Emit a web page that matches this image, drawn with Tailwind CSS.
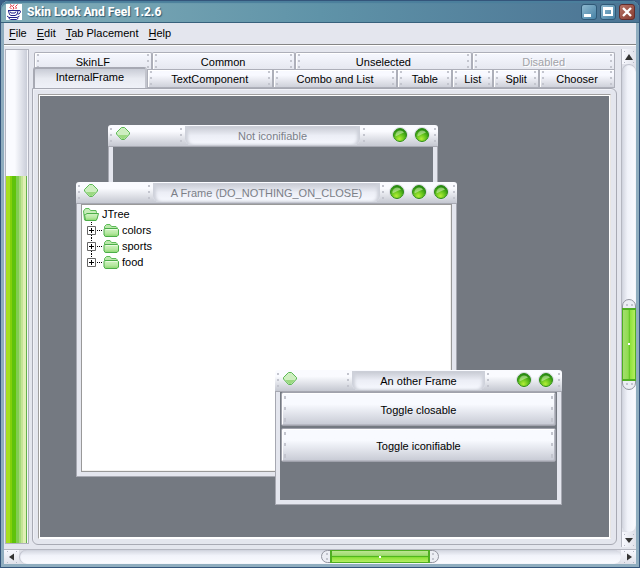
<!DOCTYPE html>
<html lang="en">
<head>
<meta charset="utf-8">
<title>Skin Look And Feel 1.2.6</title>
<script src="https://cdn.jsdelivr.net/npm/@tailwindcss/browser@4"></script>
</head>
<body class="font-['Liberation_Sans',Arial,sans-serif] text-[11px] leading-4 text-black bg-[#3a5f86]">
<svg class="absolute size-0" aria-hidden="true">
  <defs>
    <radialGradient id="orbFill" cx=".45" cy=".8" r=".75"><stop offset="0" stop-color="#b4ee38"/><stop offset=".5" stop-color="#62c21c"/><stop offset="1" stop-color="#23850f"/></radialGradient>
    <linearGradient id="shine" x1="0" y1="0" x2="1" y2="1"><stop offset="0" stop-color="#fff" stop-opacity=".3"/><stop offset="1" stop-color="#d8f8b0" stop-opacity=".65"/></linearGradient>
    <linearGradient id="folderFill" x1="0" y1="0" x2="0" y2="1"><stop offset="0" stop-color="#d4f3c6"/><stop offset=".6" stop-color="#b5e8a0"/><stop offset="1" stop-color="#8bd76f"/></linearGradient>
  </defs>
  <symbol id="dots" viewBox="0 0 2 14"><path d="M0 0h2v2H0zM0 6h2v2H0zM0 12h2v2H0z" fill="#c3c5ce"/></symbol>
  <symbol id="tallDots" viewBox="0 0 2 26"><path d="M0 0h2v3H0zM0 11h2v3H0zM0 22h2v4H0z" fill="#c3c5ce"/></symbol>
  <symbol id="orb" viewBox="0 0 16 16">
    <circle cx="8" cy="8" r="7.5" fill="#fff" stroke="#d6d8df" stroke-width="1"/>
    <circle cx="8" cy="8" r="6.5" fill="url(#orbFill)" stroke="#2c8a18"/>
    <path d="M3.5 9.500A5 5 0 0 1 8 3.500a5 5 0 0 1 4 2Q9 6.500 3.500 9.500z" fill="url(#shine)"/>
  </symbol>
  <symbol id="diamond" viewBox="0 0 14 13">
    <path d="M5.500.5h3l5 5v1.500l-5 5.500h-3l-5-5.500V5.500z" fill="#cdeec0" stroke="#5cb955"/>
    <path d="M2 8h10l-4 4H6z" fill="#9bd981"/>
  </symbol>
  <symbol id="folder" viewBox="0 0 16 13">
    <path d="M1.500 12V2.500l2-2H7l1.500 2h4.500l1 1V12z" fill="#b9e8aa" stroke="#5dbc58"/>
    <path d="M2.500 12.500L1 11V5.500l1-1h12.500l1 1V11l-1.500 1.500z" fill="url(#folderFill)" stroke="#4bae48"/>
    <path d="M3 5.500h11" stroke="#e8fadf"/>
  </symbol>
  <symbol id="folderOpen" viewBox="0 0 16 13">
    <path d="M1.500 12L.5 3l2-2.500H6l1.500 2H13l.5 2V12z" fill="#c6edb8" stroke="#5dbc58"/>
    <path d="M2.500 12.500l-1-6h1L4 5.500h11.500L14 11l-1 1.500z" fill="url(#folderFill)" stroke="#4bae48"/>
  </symbol>
  <symbol id="plus" viewBox="0 0 16 16">
    <path d="M5.500 0v4M5.500 13v3M11 8.500h5" stroke="#000" stroke-dasharray="1 1" fill="none"/>
    <path d="M1.500 4.500h8v8h-8z" fill="#fff" stroke="#666"/>
    <path d="M3 8.500h5M5.500 6v5" stroke="#000"/>
  </symbol>
</svg>

<div class="flex h-screen flex-col rounded-t-lg border border-[#34557b] bg-[#8fadbf]">
  <header class="flex h-[22px] shrink-0 items-center rounded-t-lg bg-linear-to-r from-[#83aeb9] via-[#5f93a8] to-[#4b7393] border-b border-[#37617c] pl-[5px] pr-1 shadow-[inset_0_2px_1px_#4b7f9c]">
    <svg class="size-4 shrink-0 bg-white" viewBox="0 0 16 16" fill="none">
      <path d="M4 .5l1.500 1-1.500 2 1.500 1.500M8 .5L6.500 2.500 8 4 7 5.500M11.500.5l-2 2 1 1.500-1 1" stroke="#e0303c"/>
      <path d="M2 6.500h10M2.500 7l1 3.500L5 11.500h4l2-1L12 7M4 7.500l1 1.500h4l1-1.500M12 6.500h2l.5 1.500L13 10h-1.500M1 12l2 1.500h8l2.500-1.500M2.500 14l2 1.500h6l2-1.500" stroke="#23238c"/>
    </svg>
    <h1 class="flex-1 whitespace-nowrap pl-[5px] pt-px font-[Roboto,sans-serif] text-xs font-extrabold text-white [text-shadow:1px_1px_1px_#2e5a72]">Skin Look And Feel 1.2.6</h1>
    <div class="flex gap-[3px]">
      <button aria-label="Minimize" class="size-4 rounded-[3px] border border-[#2f5977] bg-linear-to-br from-[#8fb9cf] to-[#4682a6]"><svg viewBox="0 0 14 14"><path d="M2 9h7v3H2z" fill="#fff"/></svg></button>
      <button aria-label="Maximize" class="size-4 rounded-[3px] border border-[#2f5977] bg-linear-to-br from-[#8fb9cf] to-[#4682a6]"><svg viewBox="0 0 14 14"><path d="M2 2h10v9H2zM4 5v4h6V5z" fill="#fff" fill-rule="evenodd"/></svg></button>
      <button aria-label="Close" class="size-4 rounded-[3px] border border-[#632d2c] bg-linear-to-br from-[#b77468] to-[#873c30]"><svg viewBox="0 0 14 14"><path d="M3 3l8 8M11 3l-8 8" stroke="#fff" stroke-width="2.300"/></svg></button>
    </div>
  </header>

  <div class="mx-[3px] mb-[3px] flex min-h-0 flex-1 flex-col bg-[#e4e6ee]">
    <nav class="flex h-[22px] shrink-0 items-center gap-[10px] border-b border-[#858585] px-[5px] pb-px shadow-[0_1px_0_#fff]">
      <button><u class="underline-offset-2">F</u>ile</button>
      <button><u class="underline-offset-2">E</u>dit</button>
      <button><u class="underline-offset-2">T</u>ab Placement</button>
      <button><u class="underline-offset-2">H</u>elp</button>
    </nav>

    <div class="flex min-h-0 flex-1 pt-1">
      <div role="progressbar" aria-label="Progress" aria-valuenow="74" class="ml-px flex w-6 shrink-0 flex-col justify-end border border-[#b1b3be] bg-linear-to-r from-[#fafbff] from-40% to-[#c6cad6] pr-px mb-[3px] shadow-[inset_-1px_0_0_#f4f5fa]">
        <div class="bg-[linear-gradient(90deg,#a9dd1f_0_2px,#a5e020_2px_4px,#83d00c_4px_6px,#5fc30b_6px_10px,#81cd52_10px_13px,#a5d979_13px_15px,#c4e495_15px_17px,#e0efb4_17px_20px,#62b04c_20px)]" style="height:74.500%"></div>
      </div>

      <main class="flex min-w-0 flex-1 flex-col pl-[3px] pr-1 pt-[3px] pb-[2px]">
        <div role="tablist" class="px-[2px]">
          <div class="grid h-[17px] grid-cols-[118fr_143fr_178fr_143fr]">
            <button role="tab" class="flex overflow-hidden items-start rounded-t-[2px] border border-b-0 border-[#adafb9] bg-linear-to-b from-[#f6f8ff] to-[#e6e8f0] px-[2px] pt-px shadow-[inset_1px_1px_0_#fff]"><svg class="h-[14px] w-[2px]"><use href="#dots"/></svg><span class="flex-1">SkinLF</span><svg class="h-[14px] w-[2px]"><use href="#dots"/></svg></button>
            <button role="tab" class="flex overflow-hidden items-start rounded-t-[2px] border border-b-0 border-[#adafb9] bg-linear-to-b from-[#f6f8ff] to-[#e6e8f0] px-[2px] pt-px shadow-[inset_1px_1px_0_#fff]"><svg class="h-[14px] w-[2px]"><use href="#dots"/></svg><span class="flex-1">Common</span><svg class="h-[14px] w-[2px]"><use href="#dots"/></svg></button>
            <button role="tab" class="flex overflow-hidden items-start rounded-t-[2px] border border-b-0 border-[#adafb9] bg-linear-to-b from-[#f6f8ff] to-[#e6e8f0] px-[2px] pt-px shadow-[inset_1px_1px_0_#fff]"><svg class="h-[14px] w-[2px]"><use href="#dots"/></svg><span class="flex-1">Unselected</span><svg class="h-[14px] w-[2px]"><use href="#dots"/></svg></button>
            <button role="tab" disabled class="flex overflow-hidden items-start rounded-t-[2px] border border-b-0 border-[#adafb9] bg-linear-to-b from-[#f6f8ff] to-[#e6e8f0] px-[2px] pt-px text-[#a2a3a8] [text-shadow:1px_1px_0_#fff] shadow-[inset_1px_1px_0_#fff]"><svg class="h-[14px] w-[2px]"><use href="#dots"/></svg><span class="flex-1">Disabled</span><svg class="h-[14px] w-[2px]"><use href="#dots"/></svg></button>
          </div>
          <div class="grid h-[19px] grid-cols-[113fr_126fr_125fr_55fr_41fr_46fr_76fr]">
            <button role="tab" aria-selected="true" class="-ml-px -mt-[2px] flex overflow-hidden items-start rounded-t-[3px] border-2 border-b-0 border-[#a7a9b3] border-r-[#c2c4cd] bg-linear-to-b from-[#c9ccd6] via-[#e8eaf1] via-50% to-[#eff1f8] px-px"><span class="flex-1">InternalFrame</span></button>
            <button role="tab" class="flex items-start border border-[#adafb9] bg-linear-to-b from-[#f8f9ff] from-30% to-[#cfd1da] px-[2px] pt-px shadow-[inset_1px_1px_0_#fff]"><svg class="h-[14px] w-[2px]"><use href="#dots"/></svg><span class="flex-1">TextComponent</span><svg class="h-[14px] w-[2px]"><use href="#dots"/></svg></button>
            <button role="tab" class="flex items-start border border-[#adafb9] bg-linear-to-b from-[#f8f9ff] from-30% to-[#cfd1da] px-[2px] pt-px shadow-[inset_1px_1px_0_#fff]"><svg class="h-[14px] w-[2px]"><use href="#dots"/></svg><span class="flex-1">Combo and List</span><svg class="h-[14px] w-[2px]"><use href="#dots"/></svg></button>
            <button role="tab" class="flex items-start border border-[#adafb9] bg-linear-to-b from-[#f8f9ff] from-30% to-[#cfd1da] px-[2px] pt-px shadow-[inset_1px_1px_0_#fff]"><svg class="h-[14px] w-[2px]"><use href="#dots"/></svg><span class="flex-1">Table</span><svg class="h-[14px] w-[2px]"><use href="#dots"/></svg></button>
            <button role="tab" class="flex items-start border border-[#adafb9] bg-linear-to-b from-[#f8f9ff] from-30% to-[#cfd1da] px-[2px] pt-px shadow-[inset_1px_1px_0_#fff]"><svg class="h-[14px] w-[2px]"><use href="#dots"/></svg><span class="flex-1">List</span><svg class="h-[14px] w-[2px]"><use href="#dots"/></svg></button>
            <button role="tab" class="flex items-start border border-[#adafb9] bg-linear-to-b from-[#f8f9ff] from-30% to-[#cfd1da] px-[2px] pt-px shadow-[inset_1px_1px_0_#fff]"><svg class="h-[14px] w-[2px]"><use href="#dots"/></svg><span class="flex-1">Split</span><svg class="h-[14px] w-[2px]"><use href="#dots"/></svg></button>
            <button role="tab" class="flex items-start border border-[#adafb9] bg-linear-to-b from-[#f8f9ff] from-30% to-[#cfd1da] px-[2px] pt-px shadow-[inset_1px_1px_0_#fff]"><svg class="h-[14px] w-[2px]"><use href="#dots"/></svg><span class="flex-1">Chooser</span><svg class="h-[14px] w-[2px]"><use href="#dots"/></svg></button>
          </div>
        </div>

        <div role="tabpanel" class="flex min-h-0 flex-1 rounded-md rounded-tl-none border border-[#a8aab4] p-[5px] shadow-[inset_1px_1px_0_#f0f1f7]">
          <div class="flex flex-1 border border-[#a09f9f] border-r-[#e8e6e4] border-b-white bg-white p-px">
            <div class="relative flex-1 overflow-hidden bg-[#747981]">

              <section class="absolute left-[68px] top-[29px] flex h-[150px] w-[330px] flex-col">
                <div class="flex h-[22px] shrink-0 rounded-t-[3px] border-b border-[#a6a8b1] bg-linear-to-b from-[#fafbff] from-30% to-[#c5c8d1]">
                  <div class="flex w-[77px] items-start pl-[2px] pt-[3px]"><svg class="h-[14px] w-[2px]"><use href="#dots"/></svg><button aria-label="Frame menu" class="-mt-px ml-1"><svg class="h-[13px] w-[14px]"><use href="#diamond"/></svg></button><svg class="ml-auto mr-[3px] h-[14px] w-[2px]"><use href="#dots"/></svg></div>
                  <h2 class="my-px flex-1 rounded-b-md bg-linear-to-b from-[#c5c8d1] via-[#eceef6] via-50% to-[#f7f9ff] pt-[2px] text-center text-[#7b7f88] shadow-[inset_3px_0_3px_#ced1da,inset_-3px_0_3px_#ced1da]">Not iconifiable</h2>
                  <div class="flex w-[78px] items-start pr-[2px] pt-[3px]"><svg class="ml-[3px] mr-auto h-[14px] w-[2px]"><use href="#dots"/></svg><div class="-mt-px mr-1 flex gap-[6px]"><button aria-label="Maximize frame"><svg class="size-4"><use href="#orb"/></svg></button><button aria-label="Close frame"><svg class="size-4"><use href="#orb"/></svg></button></div><svg class="h-[14px] w-[2px]"><use href="#dots"/></svg></div>
                </div>
                <div class="flex-1 border-x border-[#a6a8b1] bg-[#e4e6ee] px-1"><div class="h-full bg-[#747981]"></div></div>
              </section>

              <section class="absolute left-[36px] top-[86px] flex h-[295px] w-[381px] flex-col">
                <div class="flex h-[22px] shrink-0 rounded-t-[3px] border-b border-[#a6a8b1] bg-linear-to-b from-[#fafbff] from-30% to-[#c5c8d1]">
                  <div class="flex w-[77px] items-start pl-[2px] pt-[3px]"><svg class="h-[14px] w-[2px]"><use href="#dots"/></svg><button aria-label="Frame menu" class="-mt-px ml-1"><svg class="h-[13px] w-[14px]"><use href="#diamond"/></svg></button><svg class="ml-auto mr-[3px] h-[14px] w-[2px]"><use href="#dots"/></svg></div>
                  <h2 class="my-px flex-1 whitespace-nowrap rounded-b-md bg-linear-to-b from-[#c5c8d1] via-[#eceef6] via-50% to-[#f7f9ff] pt-[2px] text-center text-[#7b7f88] shadow-[inset_3px_0_3px_#ced1da,inset_-3px_0_3px_#ced1da]">A Frame (DO_NOTHING_ON_CLOSE)</h2>
                  <div class="flex w-[77px] items-start pr-[2px] pt-[3px]"><svg class="ml-[2px] mr-auto h-[14px] w-[2px]"><use href="#dots"/></svg><div class="-mt-px mr-1 flex gap-[6px]"><button aria-label="Iconify frame"><svg class="size-4"><use href="#orb"/></svg></button><button aria-label="Maximize frame"><svg class="size-4"><use href="#orb"/></svg></button><button aria-label="Close frame"><svg class="size-4"><use href="#orb"/></svg></button></div><svg class="h-[14px] w-[2px]"><use href="#dots"/></svg></div>
                </div>
                <div class="flex flex-1 border border-t-0 border-[#a6a8b1] bg-[#e4e6ee] px-1 pb-1">
                  <div class="flex-1 border border-[#999] bg-white pt-px shadow-[inset_-1px_-1px_0_#f2f1ef]">
                    <ul role="tree">
                      <li role="treeitem" aria-expanded="true">
                        <div class="flex h-4 items-center gap-[3px] pl-px"><svg class="h-[13px] w-4"><use href="#folderOpen"/></svg><span>JTree</span></div>
                        <ul role="group">
                          <li role="treeitem" class="flex h-4 items-center pl-1"><svg class="size-4"><use href="#plus"/></svg><svg class="ml-px mr-[3px] h-[13px] w-4"><use href="#folder"/></svg><span>colors</span></li>
                          <li role="treeitem" class="flex h-4 items-center pl-1"><svg class="size-4"><use href="#plus"/></svg><svg class="ml-px mr-[3px] h-[13px] w-4"><use href="#folder"/></svg><span>sports</span></li>
                          <li role="treeitem" class="flex h-4 items-center pl-1"><svg class="h-[13px] w-4 self-start"><use href="#plus" width="16" height="16"/></svg><svg class="ml-px mr-[3px] h-[13px] w-4"><use href="#folder"/></svg><span>food</span></li>
                        </ul>
                      </li>
                    </ul>
                  </div>
                </div>
              </section>

              <section class="absolute left-[235px] top-[274px] flex h-[135px] w-[287px] flex-col">
                <div class="flex h-[22px] shrink-0 rounded-t-[3px] border-b border-[#a6a8b1] bg-linear-to-b from-[#fafbff] from-30% to-[#c5c8d1]">
                  <div class="flex w-[77px] items-start pl-[2px] pt-[3px]"><svg class="h-[14px] w-[2px]"><use href="#dots"/></svg><button aria-label="Frame menu" class="-mt-px ml-1"><svg class="h-[13px] w-[14px]"><use href="#diamond"/></svg></button><svg class="ml-auto mr-[3px] h-[14px] w-[2px]"><use href="#dots"/></svg></div>
                  <h2 class="my-px flex-1 rounded-b-md bg-linear-to-b from-[#c5c8d1] via-[#eceef6] via-50% to-[#f7f9ff] pt-[2px] text-center shadow-[inset_3px_0_3px_#ced1da,inset_-3px_0_3px_#ced1da]">An other Frame</h2>
                  <div class="flex w-[77px] items-start pr-[2px] pt-[3px]"><svg class="ml-[2px] mr-auto h-[14px] w-[2px]"><use href="#dots"/></svg><div class="-mt-px mr-1 flex gap-[6px]"><button aria-label="Maximize frame"><svg class="size-4"><use href="#orb"/></svg></button><button aria-label="Close frame"><svg class="size-4"><use href="#orb"/></svg></button></div><svg class="h-[14px] w-[2px]"><use href="#dots"/></svg></div>
                </div>
                <div class="flex flex-1 border border-t-0 border-[#a6a8b1] bg-[#e4e6ee] px-1 pb-1">
                  <div class="flex flex-1 flex-col gap-[2px] bg-[#747981] px-px">
                    <button class="flex h-[34px] items-center rounded-[2px] border border-[#a0a2ac] bg-linear-to-b from-[#f8faff] from-35% to-[#c7cad4] px-[2px] shadow-[inset_1px_1px_0_#fff,inset_-1px_-1px_0_#b6b8c2]"><svg class="h-[26px] w-[2px]"><use href="#tallDots"/></svg><span class="flex-1 pt-[2px]">Toggle closable</span><svg class="h-[26px] w-[2px]"><use href="#tallDots"/></svg></button>
                    <button class="flex h-[34px] items-center rounded-[2px] border border-[#a0a2ac] bg-linear-to-b from-[#f8faff] from-35% to-[#c7cad4] px-[2px] shadow-[inset_1px_1px_0_#fff,inset_-1px_-1px_0_#b6b8c2]"><svg class="h-[26px] w-[2px]"><use href="#tallDots"/></svg><span class="flex-1 pt-[2px]">Toggle iconifiable</span><svg class="h-[26px] w-[2px]"><use href="#tallDots"/></svg></button>
                  </div>
                </div>
              </section>
            </div>
          </div>
        </div>
      </main>

      <div class="flex w-[15px] shrink-0 flex-col border-l border-[#b5b7c1] bg-[#dfe1e9]" aria-label="Vertical scrollbar">
        <button aria-label="Scroll up" class="flex h-[15px] items-center justify-center bg-linear-to-r from-[#f8f9ff] to-[#dfe1e9]"><svg class="size-[14px]" viewBox="0 0 14 14"><path d="M7 4l4 6H3z" fill="#333"/><path d="M2 1h1v1H2zM11 1h1v1h-1zM2 12h1v1H2zM11 12h1v1h-1z" fill="#b4b7c5"/></svg></button>
        <div class="flex flex-1 flex-col rounded-full bg-linear-to-r from-[#d2d5df] via-[#f1f3fa] via-40% to-[#fafbff] shadow-[inset_0_1px_1px_#babdc9]">
          <div style="flex:234"></div>
          <div class="flex h-[91px] flex-col rounded-full border border-[#92949e] bg-[#eceef4]">
            <svg class="h-2" viewBox="0 0 12 8"><path d="M3 4h2v2H3zM8 4h2v2H8z" fill="#c3c5ce"/></svg>
            <div class="-mx-px flex flex-1 items-center justify-center border-x border-y-2 border-[#4fae22] bg-[linear-gradient(90deg,#a5dd70_0,#8fdc4d_45%,#50b81c_50%,#8fe23a_60%,#b4ee64_100%)]"><span class="size-[2px] bg-white"></span></div>
            <svg class="h-2" viewBox="0 0 12 8"><path d="M3 2h2v2H3zM8 2h2v2H8z" fill="#c3c5ce"/></svg>
          </div>
          <div style="flex:142"></div>
        </div>
        <button aria-label="Scroll down" class="flex h-[15px] items-center justify-center bg-linear-to-r from-[#f8f9ff] to-[#dfe1e9]"><svg class="size-[14px]" viewBox="0 0 14 14"><path d="M7 10l4-5H3z" fill="#333"/><path d="M2 1h1v1H2zM11 1h1v1h-1zM2 12h1v1H2zM11 12h1v1h-1z" fill="#b4b7c5"/></svg></button>
      </div>
    </div>

    <div class="mt-[2px] flex h-[15px] shrink-0 border-t border-[#b5b7c1] bg-[#dfe1e9]" aria-label="Horizontal scrollbar">
      <button aria-label="Scroll left" class="flex w-[15px] items-center justify-center bg-linear-to-b from-[#f8f9ff] to-[#dfe1e9]"><svg class="size-[14px]" viewBox="0 0 14 14"><path d="M4 7l5-3.500v7z" fill="#333"/><path d="M2 1h1v1H2zM11 1h1v1h-1zM2 12h1v1H2zM11 12h1v1h-1z" fill="#b4b7c5"/></svg></button>
      <div class="flex flex-1 rounded-full bg-linear-to-b from-[#d2d5df] via-[#f1f3fa] via-40% to-[#fafbff] shadow-[inset_1px_0_1px_#babdc9]">
        <div style="flex:302"></div>
        <div class="flex w-[118px] rounded-full border border-[#92949e] bg-[#eceef4] mb-px">
          <svg class="w-2" viewBox="0 0 8 11"><path d="M4 2h2v2H4zM4 7h2v2H4z" fill="#c3c5ce"/></svg>
          <div class="-my-px flex flex-1 items-center justify-center border-x-2 border-y border-[#4fae22] bg-[linear-gradient(180deg,#bbe690_0,#9fdc70_40%,#50b81c_50%,#8fe23a_60%,#b4ee64_100%)]"><span class="size-[2px] bg-white"></span></div>
          <svg class="w-2" viewBox="0 0 8 11"><path d="M2 2h2v2H2zM2 7h2v2H2z" fill="#c3c5ce"/></svg>
        </div>
        <div style="flex:182"></div>
      </div>
      <button aria-label="Scroll right" class="flex w-[15px] items-center justify-center bg-linear-to-b from-[#f8f9ff] to-[#dfe1e9]"><svg class="size-[14px]" viewBox="0 0 14 14"><path d="M10 7L5 3.500v7z" fill="#333"/><path d="M2 1h1v1H2zM11 1h1v1h-1zM2 12h1v1H2zM11 12h1v1h-1z" fill="#b4b7c5"/></svg></button>
    </div>
  </div>
</div>
</body>
</html>
